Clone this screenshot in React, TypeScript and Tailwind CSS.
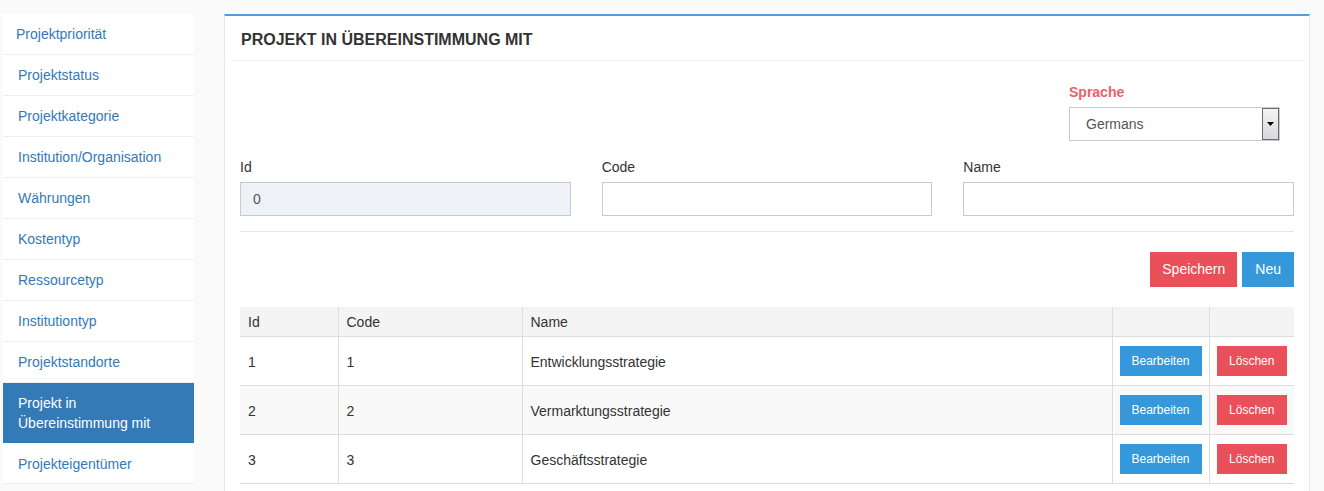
import React from "react";

const menu = [
  "Projektpriorität",
  "Projektstatus",
  "Projektkategorie",
  "Institution/Organisation",
  "Währungen",
  "Kostentyp",
  "Ressourcetyp",
  "Institutiontyp",
  "Projektstandorte",
];

const rows = [
  { id: "1", code: "1", name: "Entwicklungsstrategie" },
  { id: "2", code: "2", name: "Vermarktungsstrategie" },
  { id: "3", code: "3", name: "Geschäftsstrategie" },
];

export default function App() {
  return (
    <div
      className="w-[1324px] h-[491px] overflow-hidden bg-[#fafafa] flex items-start pt-[14px] text-[14px] text-[#333]"
      style={{ fontFamily: '"Liberation Sans", Arial, sans-serif' }}
    >
      {/* Sidebar */}
      <div className="ml-[2px] w-[192px] bg-white flex flex-col">
        {menu.map((m, i) => (
          <div
            key={m}
            className={`py-[10px] leading-[20px] border-b border-[#eeeeee] text-[#337ab7] ${
              i === 0 ? "pl-[14px]" : "pl-[15px] ml-[1px]"
            }`}
          >
            {m}
          </div>
        ))}
        <div className="ml-[1px] py-[10px] pl-[15px] leading-[20px] bg-[#337ab7] text-white">
          Projekt in
          <br />
          Übereinstimmung mit
        </div>
        <div className="ml-[1px] pt-[11px] pb-[9px] pl-[15px] leading-[20px] border-b border-[#eeeeee] text-[#337ab7]">
          Projekteigentümer
        </div>
      </div>

      {/* Panel */}
      <div className="ml-[30px] w-[1086px] bg-white border-t-2 border-t-[#5b9bd5] border-x border-x-[#e6e6e6] min-h-[480px]">
        <div className="mx-[6px] px-[10px] h-[45px] flex items-center border-b border-[#eeeeee]">
          <h1 className="text-[16px] font-bold text-[#333] pt-[4px]">
            PROJEKT IN ÜBEREINSTIMMUNG MIT
          </h1>
        </div>

        <div className="px-[15px]">
          {/* Sprache */}
          <div className="flex justify-end pt-[21px] pr-[14px]">
            <div className="w-[211px]">
              <div className="text-[#ed5f6a] font-bold leading-[20px] mb-[5px]">Sprache</div>
              <div className="h-[34px] border border-[#c5cbd6] flex items-center relative">
                <span className="pl-[16px] text-[#555]">Germans</span>
                <div className="absolute right-0 top-0 h-[32px] w-[17px] border border-[#6b6b6b] bg-gradient-to-b from-[#f4f4f4] to-[#d8d8d8] flex items-center justify-center">
                  <svg width="7" height="4" viewBox="0 0 7 4">
                    <path d="M0 0 H7 L3.5 4 Z" fill="#000" />
                  </svg>
                </div>
              </div>
            </div>
          </div>

          {/* Fields */}
          <div className="grid grid-cols-3 gap-x-[31px] mt-[16px]">
            <div>
              <div className="leading-[20px] mb-[5px]">Id</div>
              <div className="h-[34px] border border-[#c5cbd6] bg-[#eef1f6] flex items-center pl-[12px] text-[#555]">
                0
              </div>
            </div>
            <div>
              <div className="leading-[20px] mb-[5px]">Code</div>
              <div className="h-[34px] border border-[#c5cbd6] bg-white" />
            </div>
            <div>
              <div className="leading-[20px] mb-[5px]">Name</div>
              <div className="h-[34px] border border-[#c5cbd6] bg-white" />
            </div>
          </div>

          <div className="border-b border-[#e6e6e6] mt-[15px]" />

          {/* Buttons */}
          <div className="flex justify-end gap-[5px] mt-[20px]">
            <button className="h-[35px] px-[12px] bg-[#e9505a] text-white">Speichern</button>
            <button className="h-[35px] px-[13px] bg-[#3498db] text-white">Neu</button>
          </div>

          {/* Table */}
          <table className="w-full mt-[20px] border-collapse">
            <thead>
              <tr className="bg-[#f4f4f4] h-[29px] text-left">
                <th className="w-[98px] font-normal pl-[8px] pt-[3px] border-r border-b border-[#dddddd]">Id</th>
                <th className="w-[184px] font-normal pl-[8px] pt-[3px] border-x border-b border-[#dddddd]">Code</th>
                <th className="w-[590px] font-normal pl-[8px] pt-[3px] border-x border-b border-[#dddddd]">Name</th>
                <th className="w-[97px] font-normal border-x border-b border-[#dddddd]"></th>
                <th className="font-normal border-l border-b border-[#dddddd]"></th>
              </tr>
            </thead>
            <tbody>
              {rows.map((r, i) => (
                <tr key={r.id} className={`h-[49px] ${i === 1 ? "bg-[#f9f9f9]" : "bg-white"}`}>
                  <td className="pl-[8px] pt-[4px] border-r border-b border-[#dddddd]">{r.id}</td>
                  <td className="pl-[8px] pt-[4px] border-x border-b border-[#dddddd]">{r.code}</td>
                  <td className="pl-[8px] pt-[4px] border-x border-b border-[#dddddd]">{r.name}</td>
                  <td className="border-x border-b border-[#dddddd] text-center">
                    <button className="h-[30px] w-[82px] bg-[#3498db] text-white text-[12px]">Bearbeiten</button>
                  </td>
                  <td className="border-l border-b border-[#dddddd] text-center">
                    <button className="h-[30px] w-[70px] bg-[#e9505a] text-white text-[12px]">Löschen</button>
                  </td>
                </tr>
              ))}
            </tbody>
          </table>
        </div>
      </div>
    </div>
  );
}
